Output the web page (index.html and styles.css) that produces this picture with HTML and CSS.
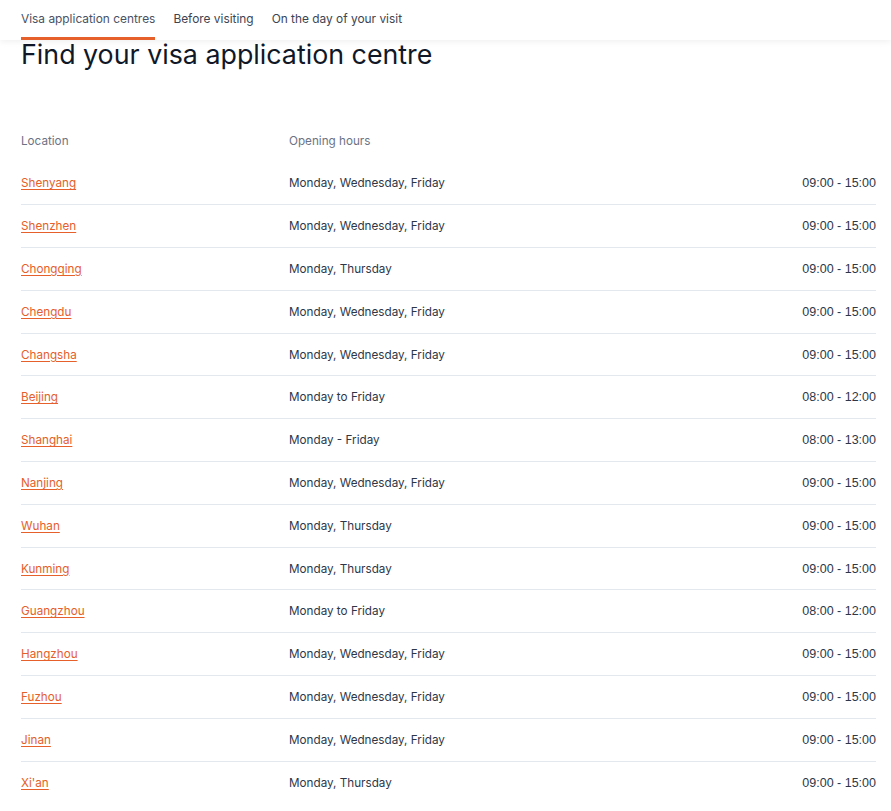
FILE: index.html
```html
<!DOCTYPE html>
<html lang="en">
<head>
<meta charset="utf-8">
<title>Find your visa application centre</title>
<link rel="stylesheet" href="styles.css">
</head>
<body>
<nav class="tabs">
  <a class="tab active" href="#">Visa application centres</a>
  <a class="tab" href="#">Before visiting</a>
  <a class="tab" href="#">On the day of your visit</a>
</nav>
<main class="page">
  <h1 class="title">Find your visa application centre</h1>
  <table class="centres">
    <thead>
      <tr><th class="loc">Location</th><th class="days">Opening hours</th><th class="hours"></th></tr>
    </thead>
    <tbody>
      <tr><td class="loc"><a href="#">Shenyang</a></td><td class="days">Monday, Wednesday, Friday</td><td class="hours">09:00 - 15:00</td></tr>
      <tr><td class="loc"><a href="#">Shenzhen</a></td><td class="days">Monday, Wednesday, Friday</td><td class="hours">09:00 - 15:00</td></tr>
      <tr><td class="loc"><a href="#">Chongqing</a></td><td class="days">Monday, Thursday</td><td class="hours">09:00 - 15:00</td></tr>
      <tr><td class="loc"><a href="#">Chengdu</a></td><td class="days">Monday, Wednesday, Friday</td><td class="hours">09:00 - 15:00</td></tr>
      <tr><td class="loc"><a href="#">Changsha</a></td><td class="days">Monday, Wednesday, Friday</td><td class="hours">09:00 - 15:00</td></tr>
      <tr><td class="loc"><a href="#">Beijing</a></td><td class="days">Monday to Friday</td><td class="hours">08:00 - 12:00</td></tr>
      <tr><td class="loc"><a href="#">Shanghai</a></td><td class="days">Monday - Friday</td><td class="hours">08:00 - 13:00</td></tr>
      <tr><td class="loc"><a href="#">Nanjing</a></td><td class="days">Monday, Wednesday, Friday</td><td class="hours">09:00 - 15:00</td></tr>
      <tr><td class="loc"><a href="#">Wuhan</a></td><td class="days">Monday, Thursday</td><td class="hours">09:00 - 15:00</td></tr>
      <tr><td class="loc"><a href="#">Kunming</a></td><td class="days">Monday, Thursday</td><td class="hours">09:00 - 15:00</td></tr>
      <tr><td class="loc"><a href="#">Guangzhou</a></td><td class="days">Monday to Friday</td><td class="hours">08:00 - 12:00</td></tr>
      <tr><td class="loc"><a href="#">Hangzhou</a></td><td class="days">Monday, Wednesday, Friday</td><td class="hours">09:00 - 15:00</td></tr>
      <tr><td class="loc"><a href="#">Fuzhou</a></td><td class="days">Monday, Wednesday, Friday</td><td class="hours">09:00 - 15:00</td></tr>
      <tr><td class="loc"><a href="#">Jinan</a></td><td class="days">Monday, Wednesday, Friday</td><td class="hours">09:00 - 15:00</td></tr>
      <tr><td class="loc"><a href="#">Xi'an</a></td><td class="days">Monday, Thursday</td><td class="hours">09:00 - 15:00</td></tr>
    </tbody>
  </table>
</main>
</body>
</html>
```

FILE: styles.css
```css
* { box-sizing: border-box; }
html, body { margin: 0; padding: 0; background: #fff; }
body {
  font-family: Inter, "Noto Sans", sans-serif;
  color: #2d3748;
  font-size: 11.7px;
}
.tabs {
  position: relative;
  z-index: 2;
  height: 40px;
  display: flex;
  gap: 18px;
  padding: 0 21px;
  background: #fff;
  box-shadow: 0 2px 6px rgba(0, 0, 0, 0.06);
}
.tab {
  display: flex;
  align-items: center;
  height: 40px;
  padding-bottom: 1px;
  font-size: 11.9px;
  color: #3d4452;
  text-decoration: none;
  border-bottom: 3px solid transparent;
}
.tab.active {
  color: #4a5263;
  border-bottom-color: #e5602a;
}
.page {
  padding: 0 15px 0 21px;
}
.title {
  margin: 0;
  font-size: 26.8px;
  font-weight: 400;
  line-height: 28px;
  color: #101828;
}
.centres {
  width: 100%;
  margin-top: 52px;
  border-collapse: collapse;
}
.centres th {
  font-weight: 400;
  text-align: left;
  color: #6b7385;
  height: 42px;
  padding: 0;
  vertical-align: middle;
}
.centres td {
  height: 42.8px;
  padding: 0;
  vertical-align: middle;
  border-bottom: 1px solid #e3e7ee;
  color: #2d3748;
}
.centres tbody tr:last-child td { border-bottom: none; }
.loc { width: 268px; }
.hours { text-align: right; }
.centres td.hours {
  font-family: "Liberation Sans", Arial, sans-serif;
  font-size: 12.5px;
  color: #2d3748;
}
.centres a {
  color: #e5602a;
  text-decoration: underline;
  text-underline-offset: 2px;
}
```
